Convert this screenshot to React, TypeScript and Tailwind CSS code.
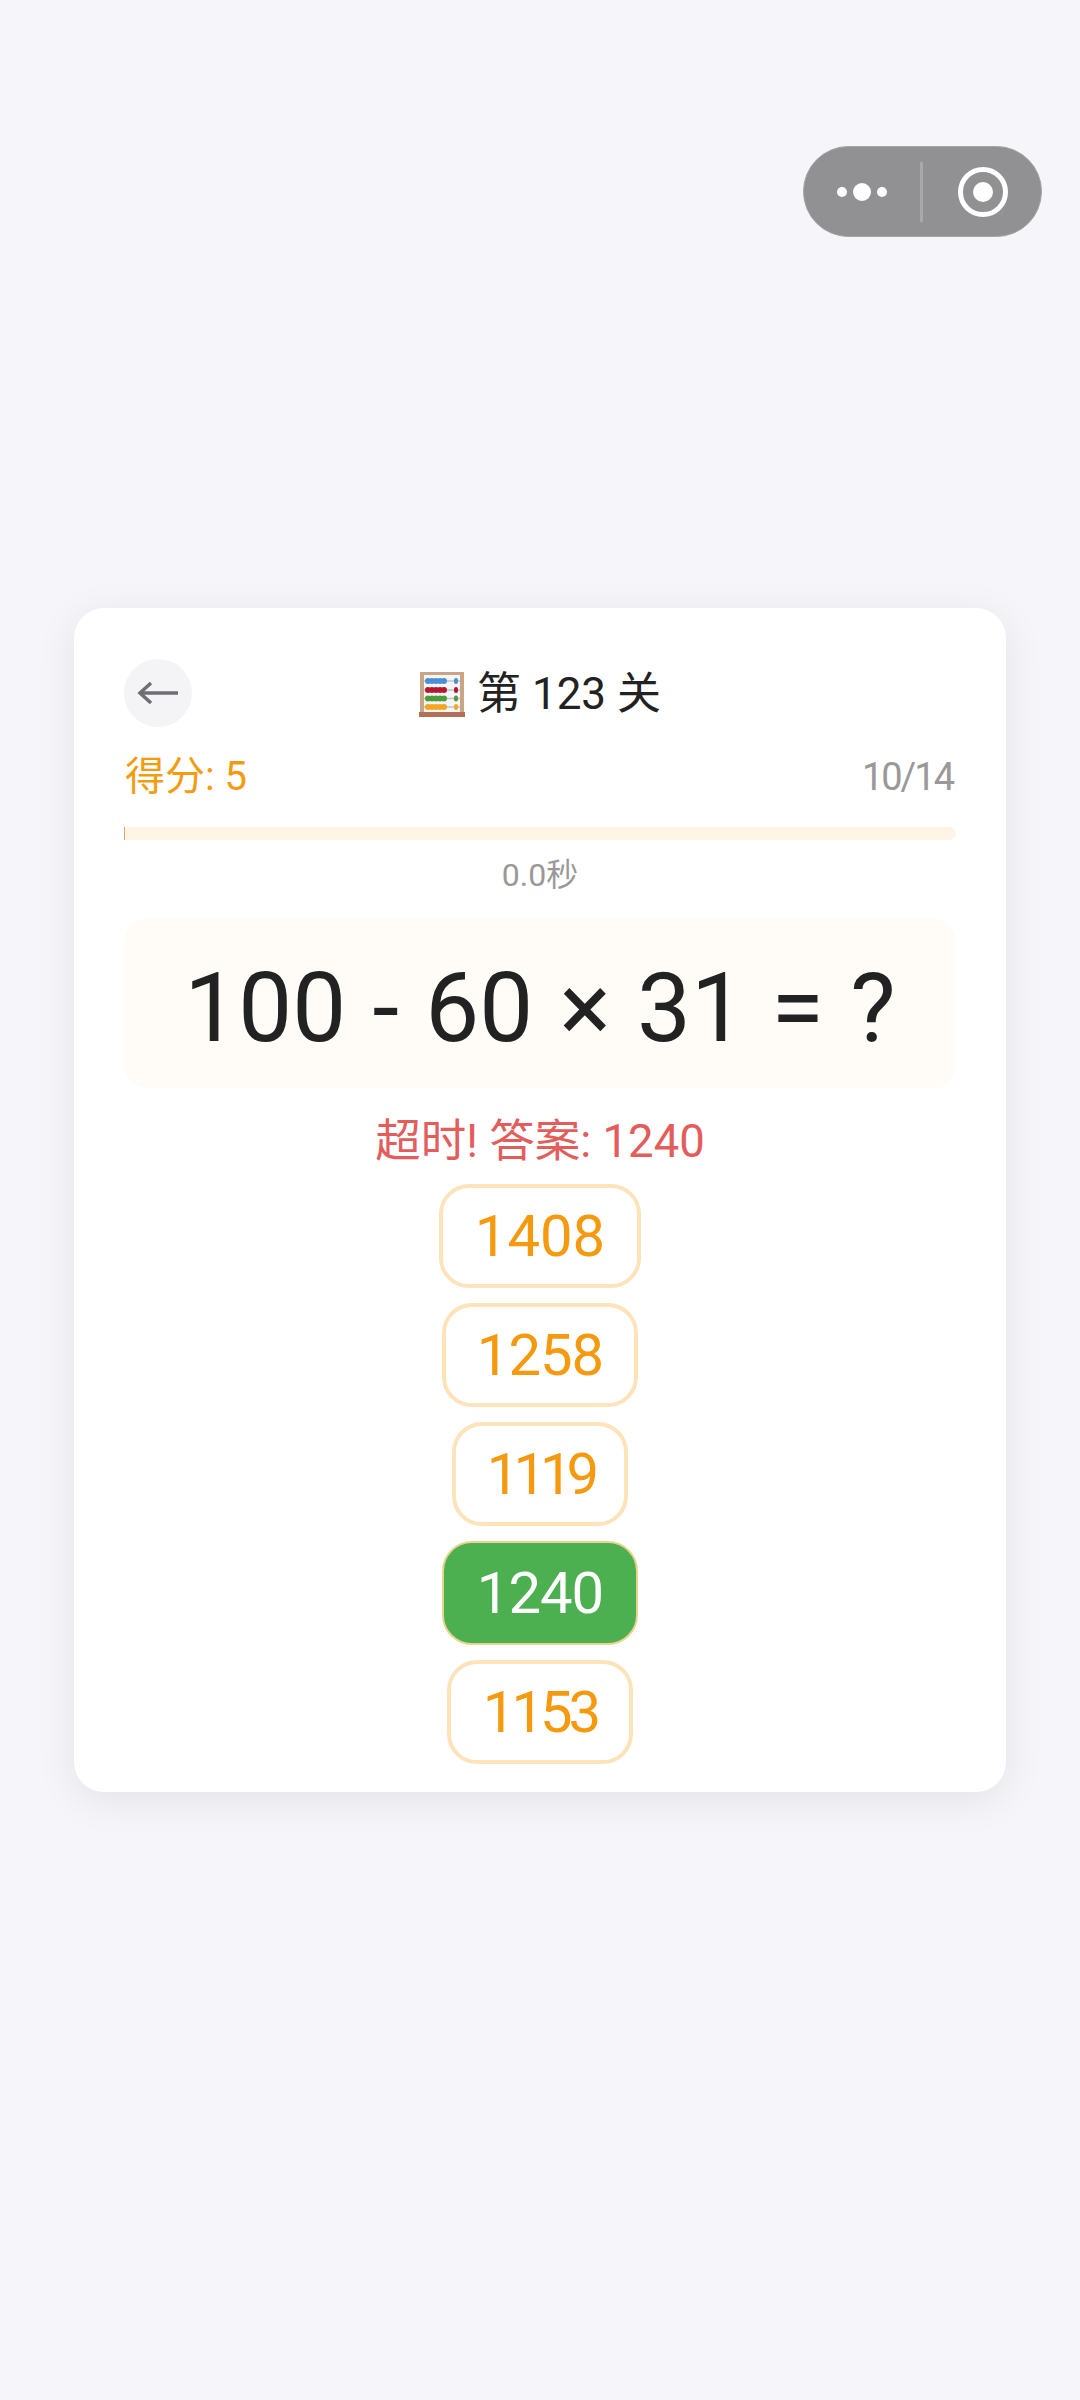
const FONT = 'font-["Roboto","Noto_Sans_CJK_SC",sans-serif]';

const OPTIONS = [
  { label: '1408', box: 'w-[202px] tracking-[0px]', correct: false },
  { label: '1258', box: 'w-[196px] tracking-[-1px]', correct: false },
  { label: '1119', box: 'w-[176px] tracking-[-6px]', correct: false },
  { label: '1240', box: 'w-[196px] tracking-[-1px]', correct: true },
  { label: '1153', box: 'w-[186px] tracking-[-4px]', correct: false },
];

function CapsuleMenu() {
  return (
    <div className="absolute left-[803px] top-[146px] flex h-[91px] w-[239px] items-center rounded-full border border-[#a5a5a8] bg-[#919193]">
      <div className="flex w-[116px] items-center justify-center gap-[6px]">
        <span className="h-[10px] w-[10px] rounded-full bg-white" />
        <span className="h-[18px] w-[18px] rounded-full bg-white" />
        <span className="h-[10px] w-[10px] rounded-full bg-white" />
      </div>
      <div className="h-[60px] w-[3px] bg-[#a9a9ab]" />
      <div className="flex flex-1 items-center justify-center pl-[2px]">
        <div className="flex h-[50px] w-[50px] items-center justify-center rounded-full border-[5px] border-white">
          <span className="h-[20px] w-[20px] rounded-full bg-white" />
        </div>
      </div>
    </div>
  );
}

function AbacusIcon() {
  const rows = [
    { y: 10, color: '#4a90d2' },
    { y: 19, color: '#b5172f' },
    { y: 27.5, color: '#4f9a3c' },
    { y: 36, color: '#f5a623' },
  ];
  const beads = [9, 13, 17, 21, 25];
  return (
    <svg width="46" height="46" viewBox="0 0 46 46">
      <rect x="1" y="1" width="44" height="42" fill="#c9a585" />
      <rect x="5" y="4" width="36" height="37" fill="#f4f6f6" />
      <rect x="0" y="41" width="46" height="5" fill="#b0705a" />
      {rows.map((row) => (
        <g key={row.y}>
          <rect x="5" y={row.y - 0.7} width="36" height="1.4" fill="#b9c4c8" />
          {beads.map((x) => (
            <circle key={x} cx={x} cy={row.y} r="3" fill={row.color} />
          ))}
          <rect x="35" y={row.y - 3} width="4" height="6" rx="2" fill={row.color} />
        </g>
      ))}
    </svg>
  );
}

export default function App() {
  return (
    <div className={`relative min-h-[2400px] bg-[#f5f5fa] pt-[608px] ${FONT}`}>
      <CapsuleMenu />

      <div className="mx-[74px] flex h-[1184px] w-[932px] flex-col rounded-[30px] bg-white px-[50px] pt-[51px] shadow-[0_8px_40px_rgba(0,0,0,0.08)]">
        {/* Header */}
        <div className="relative flex h-[68px] items-center justify-center">
          <button className="absolute left-0 top-0 flex h-[68px] w-[68px] items-center justify-center rounded-full bg-[#f4f4f6]">
            <svg width="42" height="24" viewBox="0 0 42 24" fill="none" stroke="#6e6e73" strokeWidth="3.5">
              <path d="M41 12H3" />
              <path d="M14 2L3 12l11 10" />
            </svg>
          </button>
          <div className="flex items-center gap-[12px] pt-[2px] text-[44px] leading-none text-[#222]">
            <AbacusIcon />
            <span>第 123 关</span>
          </div>
        </div>

        {/* Score */}
        <div className="mt-[27px] flex h-[46px] items-center justify-between pl-[1px] pr-[3px] text-[40px] leading-none">
          <span className="text-[#f39c12]">得分: 5</span>
          <span className="text-[38px] tracking-[-2px] text-[#999]">10/14</span>
        </div>

        {/* Progress */}
        <div className="mt-[27px] h-[13px] overflow-hidden rounded-full rounded-l-none bg-[#fef5e7]">
          <div className="h-full w-px bg-[#e8a070]" />
        </div>
        <div className="mt-[17px] h-[36px] text-center text-[32px] leading-[36px] text-[#999]">0.0秒</div>

        {/* Question */}
        <div className="mt-[25px] flex h-[170px] items-center justify-center rounded-[24px] bg-[#fffcf8] pt-[9px] text-[96px] leading-none text-[#222] [word-spacing:2.5px]">
          100 - 60 × 31 = ?
        </div>

        <div className="mt-[28px] h-[52px] text-center text-[45.5px] leading-[52px] text-[#e35d5d]">超时! 答案: 1240</div>

        {/* Options */}
        <div className="mt-[16px] flex flex-col items-center gap-[15px]">
          {OPTIONS.map((option) => (
            <div
              key={option.label}
              className={`flex h-[104px] items-center justify-center rounded-[30px] text-[58px] leading-none ${option.box} ${
                option.correct
                  ? 'border-[2px] border-[#e9d48e] bg-[#4caf50] text-white'
                  : 'border-[4px] border-[#fde3b9] bg-white text-[#f5990f]'
              }`}
            >
              {option.label}
            </div>
          ))}
        </div>
      </div>
    </div>
  );
}
